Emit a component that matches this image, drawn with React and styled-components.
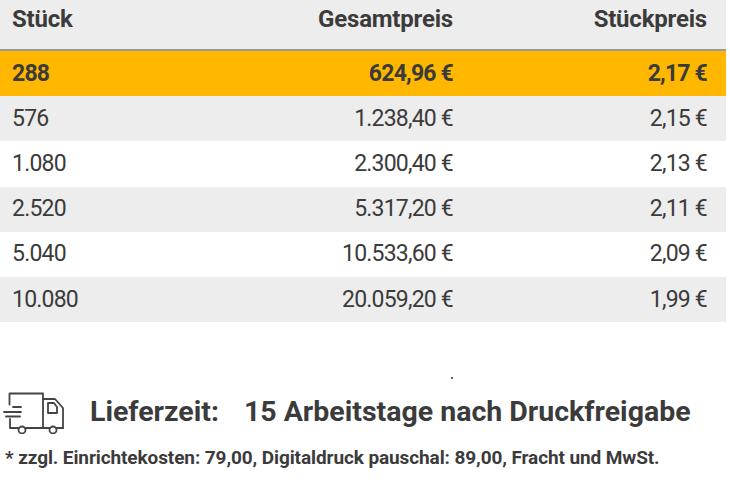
import React from 'react';
import styled, { createGlobalStyle } from 'styled-components';

const GlobalStyle = createGlobalStyle`
  body {
    margin: 0;
    background: #fff;
    font-family: Roboto, "Noto Sans", sans-serif;
    color: #3b3b3b;
  }
`;

const rows = [
  { qty: '288', total: '624,96 €', unit: '2,17 €' },
  { qty: '576', total: '1.238,40 €', unit: '2,15 €' },
  { qty: '1.080', total: '2.300,40 €', unit: '2,13 €' },
  { qty: '2.520', total: '5.317,20 €', unit: '2,11 €' },
  { qty: '5.040', total: '10.533,60 €', unit: '2,09 €' },
  { qty: '10.080', total: '20.059,20 €', unit: '1,99 €' },
];

const Page = styled.div`
  width: 730px;
  height: 489px;
  overflow: hidden;
`;

const Table = styled.div`
  width: 726px;
`;

const Row = styled.div`
  display: grid;
  grid-template-columns: 240px 232px 254px;
  align-items: center;
  height: 45.2px;
  background: ${p => (p.$active ? '#ffb700' : p.$striped ? '#ededed' : '#fff')};
  font-size: 23px;
  font-weight: ${p => (p.$active ? 700 : 400)};
  letter-spacing: -0.8px;
`;

const HeadRow = styled(Row)`
  align-items: start;
  box-sizing: border-box;
  height: 51px;
  padding-top: 5px;
  background: #ededed;
  border-bottom: 2px solid #9a9a9a;
  font-size: 24px;
  font-weight: 700;
  letter-spacing: -0.2px;
`;

const Cell = styled.div`
  text-align: ${p => (p.$left ? 'left' : 'right')};
  padding: ${p => (p.$left ? '0 0 0 12px' : '0 19px 0 0')};
  line-height: 28px;
  white-space: nowrap;
`;

const Footer = styled.div`
  padding-top: 55px;
`;

const DotRow = styled.div`
  height: 9px;
  padding-left: 451px;
`;

const Dot = styled.span`
  display: block;
  width: 2px;
  height: 2px;
  border-radius: 50%;
  background: #333;
`;

const Delivery = styled.div`
  display: flex;
  align-items: center;
  height: 50px;
`;

const TruckIcon = styled.svg`
  flex: none;
  width: 66px;
  height: 46px;
  margin-right: 24px;
`;

const Label = styled.span`
  font-size: 28.5px;
  font-weight: 700;
  letter-spacing: 0;
  margin-right: ${p => p.$gap || 0}px;
  white-space: nowrap;
`;

const Note = styled.div`
  padding: 10px 0 0 5px;
  font-size: 19px;
  font-weight: 700;
  letter-spacing: -0.1px;
  white-space: nowrap;
`;

const Truck = () => (
  <TruckIcon viewBox="0 0 66 46" fill="none" stroke="#444" strokeWidth="1.8" strokeLinecap="round" strokeLinejoin="round">
    <path d="M9.5 16.5 V5.5 H43 V40" />
    <path d="M13 19 H21 M4 24 H21 M6 28.5 H20" />
    <path d="M10 31 V40 H18.5" />
    <circle cx="22" cy="42" r="3.5" />
    <circle cx="53" cy="42" r="3.5" />
    <path d="M25.5 40 H49.5 M56.5 40 H63" />
    <path d="M43 11 H55 L63 20 V40" />
    <path d="M48 15 H54 L57 19 V25 H48 Z" />
  </TruckIcon>
);

export default function App() {
  return (
    <Page>
      <GlobalStyle />
      <Table>
        <HeadRow>
          <Cell $left>Stück</Cell>
          <Cell>Gesamtpreis</Cell>
          <Cell>Stückpreis</Cell>
        </HeadRow>
        {rows.map((r, i) => (
          <Row key={r.qty} $active={i === 0} $striped={i % 2 === 1}>
            <Cell $left>{r.qty}</Cell>
            <Cell>{r.total}</Cell>
            <Cell>{r.unit}</Cell>
          </Row>
        ))}
      </Table>
      <Footer>
        <DotRow>
          <Dot />
        </DotRow>
        <Delivery>
          <Truck />
          <Label $gap={25}>Lieferzeit:</Label>
          <Label>15 Arbeitstage nach Druckfreigabe</Label>
        </Delivery>
        <Note>* zzgl. Einrichtekosten: 79,00, Digitaldruck pauschal: 89,00, Fracht und MwSt.</Note>
      </Footer>
    </Page>
  );
}
